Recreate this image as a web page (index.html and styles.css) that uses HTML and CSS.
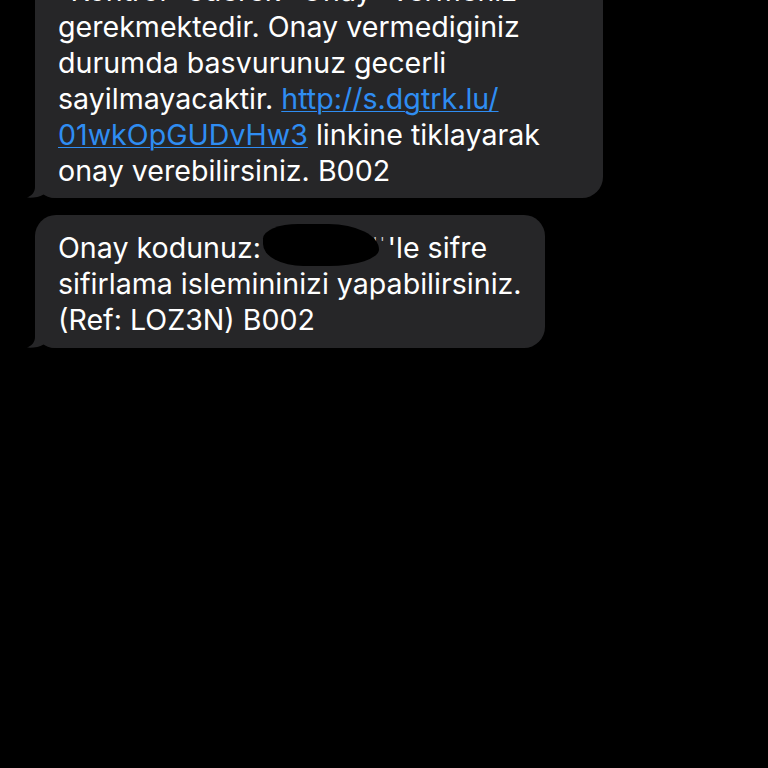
FILE: index.html
```html
<!DOCTYPE html>
<html lang="tr">
<head>
<meta charset="utf-8">
<link rel="stylesheet" href="styles.css">
</head>
<body>
<div class="thread">
  <div class="bubble bubble-one">
    <div class="line">“Kontrol” ederek “Onay” vermeniz</div>
    <div class="line">gerekmektedir. Onay vermediginiz</div>
    <div class="line">durumda basvurunuz gecerli</div>
    <div class="line">sayilmayacaktir. <a class="link" href="#">http://s.dgtrk.lu/</a></div>
    <div class="line"><a class="link" href="#">01wkOpGUDvHw3</a> linkine tiklayarak</div>
    <div class="line">onay verebilirsiniz. B002</div>
    <svg class="tail" width="30" height="24" viewBox="0 0 30 24"><path d="M8,0 L30,0 L30,24 C24,24 20,23 16.5,20.5 C12,23 6,24.2 0,23.6 C5,21.5 8,18 8,13 Z" fill="#262628"/></svg>
  </div>
  <div class="bubble bubble-two">
    <div class="line">Onay kodunuz: <span class="code"><span class="blob"></span></span><span class="mark">''</span>'le sifre</div>
    <div class="line">sifirlama islemininizi yapabilirsiniz.</div>
    <div class="line">(Ref: LOZ3N) B002</div>
    <svg class="tail" width="30" height="24" viewBox="0 0 30 24"><path d="M8,0 L30,0 L30,24 C24,24 20,23 16.5,20.5 C12,23 6,24.2 0,23.6 C5,21.5 8,18 8,13 Z" fill="#262628"/></svg>
  </div>
</div>
</body>
</html>
```

FILE: styles.css
```css
html, body {
  margin: 0;
  padding: 0;
  background: #000;
  width: 768px;
  height: 768px;
  overflow: hidden;
}

.thread {
  display: flex;
  flex-direction: column;
  align-items: flex-start;
  gap: 17px;
  padding-left: 35px;
  margin-top: -40px;
  font-family: Inter, "Liberation Sans", Arial, sans-serif;
  font-size: 28.6px;
  line-height: 36px;
  color: #fff;
}

.bubble {
  position: relative;
  background: #262628;
  border-radius: 21px;
  padding: 13px 20px 9px 23px;
  box-sizing: border-box;
}

.bubble-one {
  width: 568px;
}

.bubble-two {
  width: 510px;
  height: 133px;
  padding-top: 15px;
  padding-bottom: 10px;
}

.line {
  white-space: nowrap;
  height: 36px;
}

.link {
  color: #2f8df2;
  text-decoration: underline;
  text-decoration-thickness: 1px;
  text-underline-offset: 2px;
}

.tail {
  position: absolute;
  left: -8px;
  bottom: 0;
  display: block;
}

.code {
  position: relative;
  display: inline-block;
  width: 104px;
  height: 30px;
  vertical-align: -4px;
}

.mark {
  font-size: 14px;
  line-height: 0;
  color: #cfcfd1;
  letter-spacing: 3px;
  vertical-align: 10px;
}

.blob {
  position: absolute;
  left: -6px;
  top: -8px;
  width: 116px;
  height: 42px;
  background: #000;
  border-radius: 35% 50% 50% 40% / 40% 70% 45% 60%;
}
```
